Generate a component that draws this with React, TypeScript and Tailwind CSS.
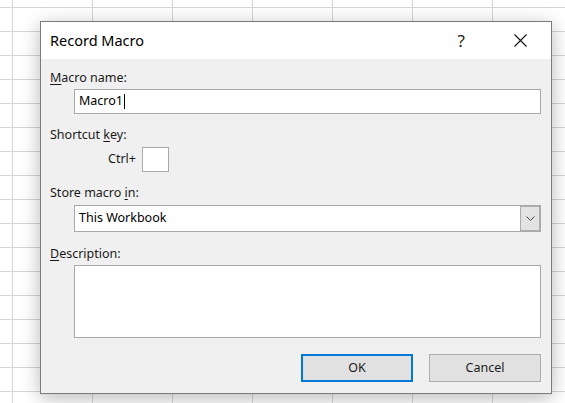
import { ReactNode } from 'react';

// Label with an access-key letter underlined, Windows style
function Label({ pre = '', ul, post, className = '' }: { pre?: string; ul: string; post: string; className?: string }) {
  return (
    <div className={`h-[16px] leading-[16px] pl-[9px] text-[12.5px] text-[#1a1a1a] ${className}`}>
      {pre}
      <span className="underline underline-offset-2">{ul}</span>
      {post}
    </div>
  );
}

function Field({ className = '', children }: { className?: string; children?: ReactNode }) {
  return (
    <div className={`ml-[33px] mr-[10px] bg-white border border-[#a9a9a9] ${className}`}>{children}</div>
  );
}

function Button({ label, primary }: { label: string; primary?: boolean }) {
  return (
    <button
      className={
        'w-[112px] h-[28px] bg-[#e1e1e1] text-[12.5px] text-[#1a1a1a] ' +
        (primary ? 'border-2 border-[#0078d7]' : 'border border-[#adadad]')
      }
    >
      {label}
    </button>
  );
}

export default function App() {
  return (
    <div
      className="relative w-[565px] h-[403px] overflow-hidden bg-white bg-[linear-gradient(to_right,#d6d6d6_1px,transparent_1px),linear-gradient(to_bottom,#d6d6d6_1px,transparent_1px)] bg-[size:80px_24px] bg-[position:12px_7px]"
      style={{ fontFamily: '"Noto Sans", "Open Sans", sans-serif' }}
    >
      {/* Dialog window */}
      <div className="absolute left-[40px] top-[21px] w-[512px] h-[373px] flex flex-col border border-[#7a7a7a] shadow-[0_4px_18px_rgba(0,0,0,0.28)]">
        {/* Title bar */}
        <div className="h-[37px] shrink-0 bg-white flex items-center pl-[9px]">
          <span className="text-[14.5px] text-black">Record Macro</span>
          <span className="ml-auto mr-[49px] text-[17px] leading-none text-[#222]">?</span>
          <svg width="13" height="13" viewBox="0 0 13 13" className="mr-[24px]">
            <path d="M0.5 0.5 L12.5 12.5 M12.5 0.5 L0.5 12.5" stroke="#111" strokeWidth="1.1" />
          </svg>
        </div>

        {/* Body */}
        <div className="flex-1 bg-[#f0f0f0] flex flex-col pt-[11px]">
          <Label ul="M" post="acro name:" />
          <Field className="mt-[3px] h-[25px] flex items-center pl-[4px]">
            <span className="text-[12.5px] text-black">Macro1</span>
            <span className="w-px h-[15px] bg-black ml-px" />
          </Field>

          <Label pre="Shortcut " ul="k" post="ey:" className="mt-[13px]" />
          <div className="mt-[4px] flex items-center pl-[67px]">
            <span className="text-[12.5px] text-[#1a1a1a]">Ctrl+</span>
            <div className="ml-auto mr-[382px] w-[27px] h-[25px] bg-white border border-[#a9a9a9]" />
          </div>

          <Label pre="Store macro " ul="i" post="n:" className="mt-[13px]" />
          <Field className="mt-[4px] h-[27px] flex items-center">
            <span className="pl-[4px] text-[12.5px] text-black">This Workbook</span>
            <div className="ml-auto w-[20px] h-full bg-[#e3e3e3] border border-[#adadad] flex items-center justify-center">
              <svg width="9" height="5" viewBox="0 0 9 5">
                <path d="M0.5 0.5 L4.5 4.5 L8.5 0.5" stroke="#444" strokeWidth="1" fill="none" />
              </svg>
            </div>
          </Field>

          <Label ul="D" post="escription:" className="mt-[14px]" />
          <Field className="mt-[3px] h-[73px]" />

          <div className="mt-[16px] flex justify-end gap-[16px] pr-[10px]">
            <Button label="OK" primary />
            <Button label="Cancel" />
          </div>
        </div>
      </div>
    </div>
  );
}
